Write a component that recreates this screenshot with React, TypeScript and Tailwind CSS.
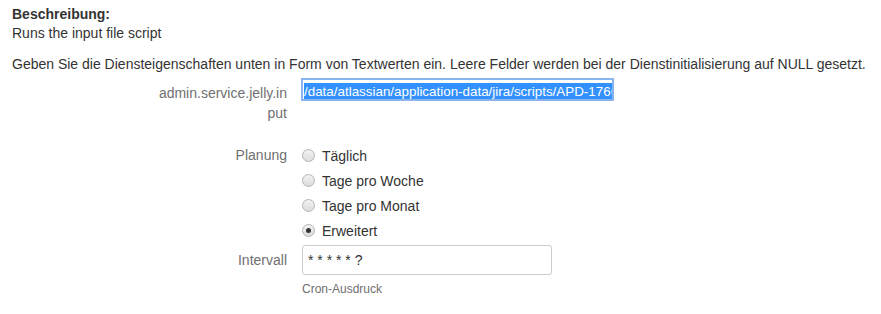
import React from 'react'

const font = { fontFamily: '"Liberation Sans", Arial, sans-serif' }

const Radio = ({ label, checked }: { label: string; checked?: boolean }) => (
  <div className="flex items-center h-[25px]">
    <span className="w-[13px] h-[13px] rounded-full border border-[#b5b5b5] bg-gradient-to-b from-[#f2f2f2] to-[#dcdcdc] flex items-center justify-center ml-[1px] mr-[7px]">
      {checked && <span className="w-[5px] h-[5px] rounded-full bg-[#333]" />}
    </span>
    <span className="text-[#333]">{label}</span>
  </div>
)

export default function App() {
  return (
    <div className="w-[881px] h-[314px] bg-white text-[14px] leading-5 text-[#333] px-3 pt-[4px]" style={font}>
      <p className="font-bold">Beschreibung:</p>
      <p className="mt-[-1px]">Runs the input file script</p>
      <p className="mt-[11px]">
        Geben Sie die Diensteigenschaften unten in Form von Textwerten ein. Leere Felder werden bei der Dienstinitialisierung auf NULL gesetzt.
      </p>

      <div className="flex mt-[4px]">
        <div className="w-[289px] pr-[14px] flex justify-end pt-[5px]">
          <span className="w-[131px] text-right text-[#707070] break-all">admin.service.jelly.input</span>
        </div>
        <div className="w-[313px] h-[23px] border-2 border-[#8ab4f0] px-[1px] py-[1px] overflow-hidden whitespace-nowrap">
          <span className="inline-block bg-[#3391ff] text-white text-[13.4px] leading-[17px] pr-[20px]">
            /data/atlassian/application-data/jira/scripts/APD-1766.jelly
          </span>
        </div>
      </div>

      <div className="flex mt-[20px]">
        <div className="w-[289px] pr-[14px] text-right text-[#707070] leading-[25px]">Planung</div>
        <div className="flex flex-col">
          <Radio label="Täglich" />
          <Radio label="Tage pro Woche" />
          <Radio label="Tage pro Monat" />
          <Radio label="Erweitert" checked />
        </div>
      </div>

      <div className="flex mt-[2px] items-center">
        <div className="w-[290px] pr-[15px] text-right text-[#707070]">Intervall</div>
        <div className="w-[250px] h-[30px] border border-[#cccccc] rounded-[3px] pl-[5px] flex items-center text-[#333]">
          * * * * * ?
        </div>
      </div>
      <div className="pl-[290px] mt-[6px] text-[12px] text-[#707070] leading-4">Cron-Ausdruck</div>
    </div>
  )
}
